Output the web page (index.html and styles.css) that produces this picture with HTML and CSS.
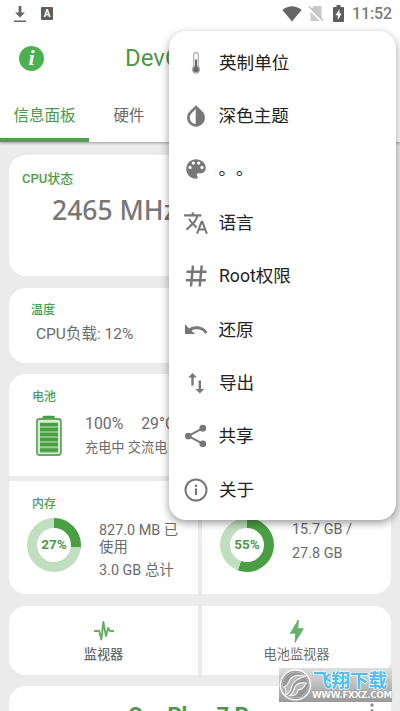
FILE: index.html
```html
<!DOCTYPE html>
<html lang="zh-CN">
<head>
<meta charset="utf-8">
<meta name="viewport" content="width=device-width, initial-scale=1">
<title>DevCheck</title>
<link rel="stylesheet" href="styles.css">
</head>
<body>
<div class="screen">
  <header class="top">
    <div class="status">
      <svg class="st-download" width="14" height="18" viewBox="0 0 14 18"><path d="M5.600 1h2.800v6.500h3.600L7 12.500 2 7.500h3.600z M1 15.500h12v1.600H1z" fill="#666"/></svg>
      <span class="st-a">A</span>
      <span class="grow"></span>
      <svg class="st-wifi" width="20" height="16" viewBox="0 0 20 16"><path d="M10 15.500L.4 4Q10-3.500 19.600 4z" fill="#666"/></svg>
      <svg class="st-sim" width="16" height="17" viewBox="0 0 16 17"><path d="M6 1h7.500v15H2.500V5z" fill="#c9c9c9"/><path d="M0 2.500l14.500 14" stroke="#fff" stroke-width="3"/><path d="M1 1.500l14 14" stroke="#bbb" stroke-width="1.300"/></svg>
      <svg class="st-battery" width="11" height="17" viewBox="0 0 11 17"><path d="M3.500 0h4v2H10q1 0 1 1v13q0 1-1 1H1q-1 0-1-1V3q0-1 1-1h2.500z" fill="#5e5e5e"/><path d="M6.500 4L2.500 10.200h2.300V15L8.700 8.500H6.500z" fill="#fff"/></svg>
      <span class="clock">11:52</span>
    </div>
    <div class="titlebar">
      <span class="badge">i</span>
      <h1>DevCheck</h1>
    </div>
    <nav class="tabs">
      <span class="tab active">信息面板</span>
      <span class="tab">硬件</span>
    </nav>
  </header>

  <main>
    <section class="card cpu">
      <h2>CPU状态</h2>
      <p class="freq">2465 MHz</p>
    </section>
    <section class="card temp">
      <h2>温度</h2>
      <p>CPU负载: 12%</p>
    </section>
    <section class="group">
      <div class="card battery">
        <h2>电池</h2>
        <div class="battery-row">
          <svg width="28" height="42" viewBox="0 0 28 42"><path d="M7.500 4V2.500Q7.500.8 9 .8h9.500q1.500 0 1.500 1.700V4z" fill="#4a9a45"/><rect x="1.900" y="4" width="24" height="36" rx="2.500" fill="#d6ecd3" stroke="#62a95d" stroke-width="1.800"/><path d="M5 8h18v30H5z" fill="#9dcc99"/><path d="M5 9.500h18M5 14.500h18M5 19.500h18M5 24.500h18M5 29.500h18M5 35h18" stroke="#49a043" stroke-width="3.600"/></svg>
          <div class="battery-text">
            <p class="levels"><span>100%</span><span>29°C</span></p>
            <p class="source">充电中 交流电</p>
          </div>
        </div>
      </div>
      <div class="pair">
        <div class="card memory">
          <h2>内存</h2>
          <div class="usage">
            <div class="ring ram"><b>27%</b></div>
            <div class="detail"><p class="used">827.0 MB 已使用</p><p>3.0 GB 总计</p></div>
          </div>
        </div>
        <div class="card storage">
          <div class="usage">
            <div class="ring disk"><b>55%</b></div>
            <div class="detail"><p>15.7 GB /</p><p>27.8 GB</p></div>
          </div>
        </div>
      </div>
    </section>
    <section class="pair tools">
      <div class="card tool">
        <svg width="22" height="24" viewBox="0 0 22 24"><path d="M1 12h5.200l2.200 8.500L10.300 3l2.700 14 2.200-8 1.800 3H21" fill="none" stroke="#66b062" stroke-width="2" stroke-linejoin="round"/></svg>
        <span class="strong">监视器</span>
      </div>
      <div class="card tool">
        <svg width="22" height="24" viewBox="0 0 22 24"><path d="M12.300 1L4.500 14.200h5.300L9 23.300 17.200 9.800h-5.400z" fill="#68b064" stroke="#68b064" stroke-linejoin="round"/></svg>
        <span>电池监视器</span>
      </div>
    </section>
    <section class="card device">
      <strong>OnePlus 7 Pro</strong>
      <svg width="4" height="20" viewBox="0 0 4 20"><g fill="#888"><circle cx="2" cy="2" r="1.700"/><circle cx="2" cy="8" r="1.700"/><circle cx="2" cy="14" r="1.700"/></g></svg>
    </section>
  </main>

  <div class="menu">
    <div class="item"><svg viewBox="0 0 24 24"><path d="M9.700 15V4q0-2.500 2.300-2.500T14.300 4v11" fill="#fff" stroke="#b3b3b3" stroke-width="1.300"/><circle cx="12" cy="18.500" r="4.200" fill="#ababab"/><circle cx="12" cy="18.500" r="2.600" fill="#686868"/><path d="M12 8.500V18" stroke="#686868" stroke-width="2"/></svg><span>英制单位</span></div>
    <div class="item"><svg class="big" viewBox="0 0 24 24"><path d="M17.660 7.930L12 2.270 6.340 7.930c-3.120 3.120-3.120 8.190 0 11.310C7.900 20.800 9.950 21.580 12 21.580s4.100-.78 5.660-2.340c3.120-3.120 3.120-8.190 0-11.310zM12 19.590c-1.600 0-3.110-.62-4.240-1.760C6.620 16.690 6 15.190 6 13.590s.62-3.110 1.760-4.240L12 5.100z" stroke="#777" stroke-width=".5"/></svg><span>深色主题</span></div>
    <div class="item"><svg class="big" viewBox="0 0 24 24"><path d="M12 3c5 0 9 3.600 9 8 0 2.800-2.200 5-5 5h-1.800c-.8 0-1.500.7-1.500 1.500 0 .4.200.7.400 1 .2.300.4.600.4 1 0 .9-.7 1.500-1.500 1.500-5 0-9-4-9-9s4-9 9-9zM6.500 12a1.500 1.500 0 1 0 0-3 1.500 1.500 0 0 0 0 3zm3-4a1.500 1.500 0 1 0 0-3 1.500 1.500 0 0 0 0 3zm5 0a1.500 1.500 0 1 0 0-3 1.500 1.500 0 0 0 0 3zm3 4a1.500 1.500 0 1 0 0-3 1.500 1.500 0 0 0 0 3z" fill-rule="evenodd"/></svg><span class="dots">。。</span></div>
    <div class="item"><svg class="big" viewBox="0 0 24 24"><path d="M12.870 15.070l-2.540-2.510.03-.03c1.740-1.940 2.980-4.170 3.710-6.530H17V4h-7V2H8v2H1v1.990h11.170C11.500 7.920 10.440 9.750 9 11.350 8.070 10.320 7.300 9.190 6.690 8h-2c.73 1.630 1.730 3.170 2.980 4.560l-5.090 5.020L4 19l5-5 3.110 3.110.76-2.040zM18.500 10h-2L12 22h2l1.120-3h4.750L21 22h2l-4.500-12zm-2.620 7l1.620-4.330L19.120 17h-3.240z"/></svg><span>语言</span></div>
    <div class="item"><svg viewBox="0 0 24 24"><path d="M9 1.500L7 22.500M17.700 1.500l-2 21M2.500 7.700h20M1.800 16.300h20" fill="none" stroke="#777" stroke-width="2.500"/></svg><span>Root权限</span></div>
    <div class="item"><svg class="big" viewBox="0 0 24 24"><path d="M1.800 6.500v9.300h9.500l-3.500-3.100c1.500-.9 3-1.300 4.700-1.300 3.500 0 6.400 1.400 7.900 4.100l2.200-1.100C20.500 10.600 17 8.600 12.500 8.600c-2.600 0-5 .7-7 1.900z"/></svg><span>还原</span></div>
    <div class="item"><svg viewBox="0 0 24 24"><path d="M7.300 14.500V6.500H4.100L8.500 2l4.400 4.500H9.700v8zM14.600 9.500v8.600h-3.200l4.400 4.500 4.400-4.500H17V9.500z"/></svg><span>导出</span></div>
    <div class="item"><svg class="big" viewBox="0 0 24 24"><path d="M18 5L5 12l13 7" fill="none" stroke="#777" stroke-width="1.800"/><circle cx="18.300" cy="4.800" r="3.100"/><circle cx="4.900" cy="12" r="3.100"/><circle cx="18.300" cy="19.200" r="3.100"/></svg><span>共享</span></div>
    <div class="item"><svg viewBox="0 0 24 24"><circle cx="12" cy="12" r="10.500" fill="none" stroke="#777" stroke-width="2"/><path d="M10.900 10.500h2.200V17h-2.200zM10.900 6.800h2.200V9h-2.200z"/></svg><span>关于</span></div>
  </div>

  <div class="watermark">
    <svg width="34" height="34" viewBox="0 0 34 34"><circle cx="17" cy="17" r="15.500" fill="#999" stroke="#fff" stroke-width="1.500"/><circle cx="17" cy="17" r="13.500" fill="#989898" stroke="#bbb"/><path d="M28 8Q15 5 11 12 9 18 5 19q3 3 2 8 5-2 6-8 2-8 15-11zM28 15q-10-1-12 5-1 5-5 8 7 1 9-6 5 0 8-7z" fill="#b8b8b8" stroke="#f4f4f4" stroke-width="1.200"/></svg>
    <div class="wm-text"><span class="wm-name">飞翔下载</span><span class="wm-url">WWW.FXXZ.COM</span></div>
  </div>
</div>
</body>
</html>
```

FILE: styles.css
```css
* { box-sizing: border-box; }
body, h1, h2, p { margin: 0; }
body {
  font-family: Roboto, "Noto Sans CJK SC", sans-serif;
  color: #6b6b6b;
  background: #ebebeb;
}
.screen { position: relative; width: 400px; height: 711px; overflow: hidden; }

.top { height: 142px; background: #fff; box-shadow: 0 1px 3px rgba(0, 0, 0, .35); }
.status { display: flex; align-items: center; height: 27px; padding: 0 9px 0 13px; }
.st-a {
  width: 12px; height: 13px; margin-left: 14px;
  border-radius: 1px; background: #5e5e5e; color: #fff;
  font: bold 10px/13px Roboto, sans-serif; text-align: center;
}
.grow { flex: 1; }
.st-wifi { margin-right: 6px; }
.st-sim { margin-right: 9px; }
.st-battery { margin-right: 8px; }
.clock { font-size: 16px; line-height: 28px; letter-spacing: -.1px; font-weight: 500; color: #7c7c7c; width: 39px; white-space: nowrap; }

.titlebar { display: flex; align-items: center; height: 62px; padding-left: 19px; }
.badge {
  width: 25px; height: 25px; border-radius: 50%;
  background: #4caf50; color: #fff;
  font: italic bold 22px/23px "Liberation Serif", serif; text-align: center;
}
h1 { margin-left: 81px; font-size: 24px; line-height: 30px; font-weight: 400; color: #4b9848; }

.tabs { display: flex; height: 53px; }
.tab { width: 80px; font-size: 15.500px; line-height: 54px; text-align: center; }
.tab.active { width: 89px; height: 53px; border-bottom: 4px solid #539c4e; border-radius: 4px 4px 0 0; color: #4b9848; }

main { padding: 13px 9px 0; }
.card { background: #fff; border-radius: 17px; }
h2 { font-size: 12px; line-height: 16px; font-weight: 500; color: #4b9f48; }

.cpu { height: 121px; padding: 16px 13px; }
.cpu h2 { font-size: 13px; }
.freq { margin: 6px 0 0 30px; font: 500 26.500px/34px "Noto Sans", sans-serif; color: #777; }
.temp { height: 75px; margin-top: 12px; padding: 14px 22px; }
.temp p { margin: 6px 0 0 5px; font-size: 15.500px; line-height: 20px; }

.group { margin-top: 11px; }
.battery { height: 102px; padding: 15px 23px; border-radius: 17px 17px 0 0; }
.battery-row { display: flex; align-items: flex-start; padding: 10px 0 0 3px; }
.battery-text { margin-left: 22px; }
.levels { display: flex; gap: 18px; font-size: 15.800px; line-height: 18px; }
.source { margin-top: 4px; font-size: 13.200px; line-height: 22px; }
.pair { display: grid; grid-template-columns: 189px 189px; gap: 4px; }
.group .pair { margin-top: 5px; }
.memory, .storage { height: 113px; padding: 15px 0 0 18px; }
.memory { border-radius: 0 0 0 17px; }
.storage { border-radius: 0 0 17px 0; padding-top: 31px; }
.memory h2 { padding-left: 5px; }
.usage { display: flex; align-items: flex-start; padding-top: 6px; }
.ring { display: grid; place-items: center; width: 54px; height: 54px; border-radius: 50%; }
.ring b { display: grid; place-items: center; width: 34px; height: 34px; border-radius: 50%; background: #fff; color: #4b9848; font-size: 13.500px; line-height: 16px; padding-bottom: 3px; }
.ram { background: conic-gradient(#4b9f43 0 26.500%, #bfdfbe 26.500%); }
.disk { background: conic-gradient(#4b9f43 0 55.500%, #bfdfbe 55.500%); }
.detail { margin-left: 18px; width: 86px; font-size: 14.400px; line-height: 24px; }
.memory .detail { padding-top: 4px; }
.used { line-height: 17px; margin-bottom: 3px; }

.tools { margin-top: 12px; }
.tool { display: flex; flex-direction: column; align-items: center; height: 69px; padding-top: 13px; font-size: 13.200px; line-height: 24px; }
.tool .strong { font-weight: 500; }
.tool:first-child { border-radius: 17px 0 0 17px; }
.tool:last-child { border-radius: 0 17px 17px 0; }
.device { display: flex; justify-content: space-between; height: 80px; margin-top: 11px; padding: 17px 17px 0 119px; color: #4b9848; font-size: 22px; line-height: 26px; }

.menu {
  position: absolute; left: 169px; top: 31px; width: 227px; height: 489px;
  padding: 5px 0; border-radius: 17px; background: #fff;
  box-shadow: 0 3px 9px rgba(0, 0, 0, .4);
}
.item { display: flex; align-items: center; height: 53.400px; padding-left: 14px; color: #222; font-size: 17.600px; line-height: 24px; }
.item svg { width: 24px; height: 24px; margin: 0 11px 0 1px; fill: #777; }
.item svg.big { width: 26px; height: 26px; margin: 0 9.500px 0 0; }
.dots { text-spacing-trim: space-all; }

.watermark {
  position: absolute; left: 279px; top: 668px; width: 113px; height: 34px;
  display: flex; background: linear-gradient(#dedede, #999);
}
.wm-text { display: flex; flex-direction: column; }
.wm-name { font: 700 18.500px/23px "Noto Sans CJK SC", sans-serif; color: #55bde6; -webkit-text-stroke: 1.500px #eaf7fc; paint-order: stroke fill; white-space: nowrap; padding-left: 1px; }
.wm-url { font: bold 8.800px/9px "DejaVu Sans", sans-serif; color: #fff; -webkit-text-stroke: .6px #888; paint-order: stroke fill; white-space: nowrap; letter-spacing: -.3px; }
```
